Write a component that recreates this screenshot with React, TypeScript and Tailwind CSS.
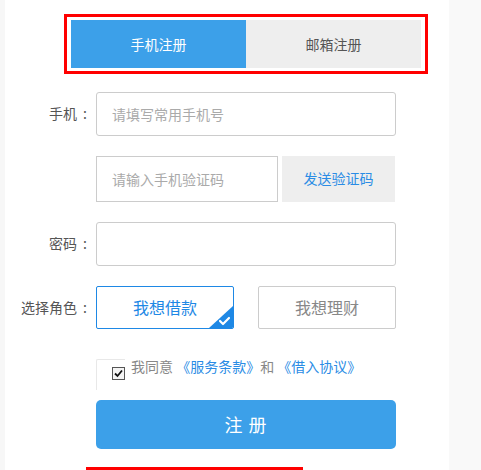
import React, { useState } from 'react';

const font = { fontFamily: '"Noto Sans CJK SC", "Noto Sans", sans-serif' };

const Label: React.FC<{ text: string }> = ({ text }) => (
    <label className="w-[86px] pr-[4px] text-right text-[14px] text-[#555]">
        {text}
        <span className="ml-[6px]">:</span>
    </label>
);

const App: React.FC = () => {
    const [tab, setTab] = useState<'phone' | 'email'>('phone');
    const [role, setRole] = useState<'borrow' | 'invest'>('borrow');
    const [agree, setAgree] = useState(true);

    return (
        <div className="flex w-[481px] h-[470px] overflow-hidden bg-[#f9f9f9]" style={font}>
            <div className="w-[5px] shrink-0 bg-[#f7f7f7]" />
            <div className="w-[444px] shrink-0 bg-white flex flex-col">
                {/* tabs */}
                <div className="mt-[14px] ml-[59px] w-[364px] h-[60px] border-[3px] border-[#ff0000] pl-[4px] pt-[3px]">
                    <div className="flex h-[48px] w-[350px]">
                        <button
                            onClick={() => setTab('phone')}
                            className={`w-[175px] h-full text-[14px] ${tab === 'phone' ? 'bg-[#3ca0e9] text-white' : 'bg-[#eeeeee] text-[#555]'}`}
                        >
                            手机注册
                        </button>
                        <button
                            onClick={() => setTab('email')}
                            className={`w-[175px] h-full text-[14px] ${tab === 'email' ? 'bg-[#3ca0e9] text-white' : 'bg-[#eeeeee] text-[#555]'}`}
                        >
                            邮箱注册
                        </button>
                    </div>
                </div>

                {/* phone */}
                <div className="flex items-center mt-[18px]">
                    <Label text="手机" />
                    <input
                        className="ml-[5px] w-[300px] h-[44px] border border-[#cccccc] rounded-[3px] px-[15px] text-[14px] text-[#333] outline-none placeholder:text-[#aaaaaa]"
                        placeholder="请填写常用手机号"
                    />
                </div>

                {/* code */}
                <div className="flex items-center mt-[20px] pl-[91px]">
                    <input
                        className="w-[182px] h-[46px] border border-[#cccccc] px-[15px] text-[14px] text-[#333] outline-none placeholder:text-[#aaaaaa]"
                        placeholder="请输入手机验证码"
                    />
                    <button className="ml-[4px] w-[113px] h-[46px] bg-[#eeeeee] text-[14px] text-[#2a8ce5]">发送验证码</button>
                </div>

                {/* password */}
                <div className="flex items-center mt-[20px]">
                    <Label text="密码" />
                    <input
                        type="password"
                        className="ml-[5px] w-[300px] h-[44px] border border-[#cccccc] rounded-[3px] px-[15px] text-[14px] outline-none"
                    />
                </div>

                {/* role */}
                <div className="flex items-center mt-[20px]">
                    <Label text="选择角色" />
                    <button
                        onClick={() => setRole('borrow')}
                        className={`relative ml-[5px] w-[138px] h-[43px] rounded-[2px] border text-[16px] overflow-hidden ${role === 'borrow' ? 'border-[#1e88e5] text-[#1e88e5]' : 'border-[#cccccc] text-[#888]'}`}
                    >
                        我想借款
                        {role === 'borrow' && (
                            <svg className="absolute right-0 bottom-0 w-[24px] h-[22px]" viewBox="0 0 24 22">
                                <path d="M24 0 L24 22 L0 22 Z" fill="#1e88e5" />
                                <path d="M11 15 L14 18 L20 12" fill="none" stroke="#fff" strokeWidth="2.2" strokeLinecap="round" strokeLinejoin="round" />
                            </svg>
                        )}
                    </button>
                    <button
                        onClick={() => setRole('invest')}
                        className={`relative ml-[24px] w-[138px] h-[43px] rounded-[2px] border text-[16px] overflow-hidden ${role === 'invest' ? 'border-[#1e88e5] text-[#1e88e5]' : 'border-[#cccccc] text-[#888]'}`}
                    >
                        我想理财
                        {role === 'invest' && (
                            <svg className="absolute right-0 bottom-0 w-[24px] h-[22px]" viewBox="0 0 24 22">
                                <path d="M24 0 L24 22 L0 22 Z" fill="#1e88e5" />
                                <path d="M11 15 L14 18 L20 12" fill="none" stroke="#fff" strokeWidth="2.2" strokeLinecap="round" strokeLinejoin="round" />
                            </svg>
                        )}
                    </button>
                </div>

                {/* agreement */}
                <div className="flex items-start mt-[30px] pl-[91px]">
                    <div className="w-[29px] h-[31px] border-l border-t border-[#e8e8e8] rounded-tl-[2px] flex justify-end pt-[7px]">
                        <button
                            onClick={() => setAgree(!agree)}
                            className="w-[13px] h-[13px] border border-[#555] bg-[#f4f4f4] flex items-center justify-center"
                        >
                            {agree && (
                                <svg className="w-[9px] h-[9px]" viewBox="0 0 9 9">
                                    <path d="M1 4.5 L3.5 7 L8 1.5" fill="none" stroke="#111" strokeWidth="1.8" />
                                </svg>
                            )}
                        </button>
                    </div>
                    <p className="ml-[6px] mt-[-3px] text-[14px] leading-[20px] text-[#888]">
                        我同意 <a className="text-[#2a8ce5]">《服务条款》</a>和 <a className="text-[#2a8ce5]">《借入协议》</a>
                    </p>
                </div>

                {/* submit */}
                <button className="ml-[91px] mt-[10px] w-[300px] h-[50px] rounded-[5px] bg-[#3ca0e9] text-white text-[18px] tracking-[1px]">
                    注 册
                </button>

                <div className="mt-[18px] ml-[81px] w-[217px] h-[3px] bg-[#ff0000]" />
            </div>
            <div className="flex-1 bg-[#f9f9f9]" />
        </div>
    );
};

export default App;
